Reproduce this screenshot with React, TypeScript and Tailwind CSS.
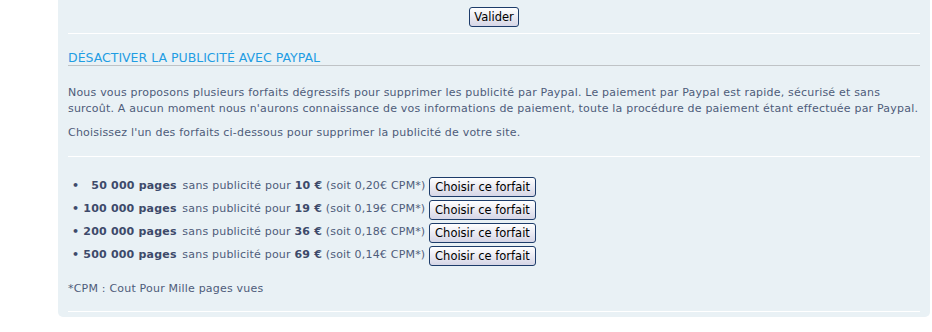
import React from "react";

const font = { fontFamily: "Verdana, 'DejaVu Sans', sans-serif" };

function Btn({ children, px }: { children: React.ReactNode; px: string }) {
  return (
    <button
      className={
        "h-[20px] border border-[#1d3c6a] rounded-[3px] bg-gradient-to-b from-white to-[#d6d6e6] text-black text-[11.5px] leading-[18px] tracking-normal cursor-pointer " +
        px
      }
      style={font}
    >
      {children}
    </button>
  );
}

const rows = [
  { pages: "\u00a0\u00a050 000 pages", price: "10 €", cpm: "0,20€" },
  { pages: "100 000 pages", price: "19 €", cpm: "0,19€" },
  { pages: "200 000 pages", price: "36 €", cpm: "0,18€" },
  { pages: "500 000 pages", price: "69 €", cpm: "0,14€" },
];

export default function App() {
  return (
    <div className="w-[932px] h-[332px] bg-white overflow-hidden" style={font}>
      <div className="ml-[58px] w-[872px] bg-[#e9f1f5] rounded-b-[5px] px-[10px] pb-[5px] text-[11px] tracking-[0.2px] text-[#4e5c7a]">
        <div className="flex justify-center pt-[7px] pb-[6px]">
          <Btn px="px-[4px]">Valider</Btn>
        </div>
        <div className="h-px bg-white" />
        <h2 className="mt-[17px] text-[12.5px] leading-[14px] font-normal tracking-normal text-[#1f9de3] border-b border-[#bfc3c6] uppercase">
          Désactiver la publicité avec Paypal
        </h2>
        <p className="mt-[19px] leading-[16px] whitespace-nowrap">
          Nous vous proposons plusieurs forfaits dégressifs pour supprimer les publicité par Paypal. Le paiement par Paypal est rapide, sécurisé et sans
          <br />
          surcoût. A aucun moment nous n'aurons connaissance de vos informations de paiement, toute la procédure de paiement étant effectuée par Paypal.
        </p>
        <p className="mt-[8px] leading-[16px]">
          Choisissez l'un des forfaits ci-dessous pour supprimer la publicité de votre site.
        </p>
        <div className="mt-[15px] h-px bg-white" />
        <div className="mt-[18px] flex flex-col">
          {rows.map((r) => (
            <div key={r.pages} className="h-[23px] flex items-center whitespace-pre">
              <span className="font-bold tracking-[0.2px] text-[#3d4a6a]">{" • " + r.pages}</span>
              <span className="ml-[2px]"> sans publicité pour </span>
              <span className="font-bold tracking-[0.2px] text-[#3d4a6a]">{r.price}</span>
              <span>{" (soit " + r.cpm + " CPM*) "}</span>
              <Btn px="px-[5px]">Choisir ce forfait</Btn>
            </div>
          ))}
        </div>
        <p className="mt-[14px] leading-[16px]">*CPM : Cout Pour Mille pages vues</p>
        <div className="mt-[14px] h-px bg-white" />
      </div>
    </div>
  );
}
